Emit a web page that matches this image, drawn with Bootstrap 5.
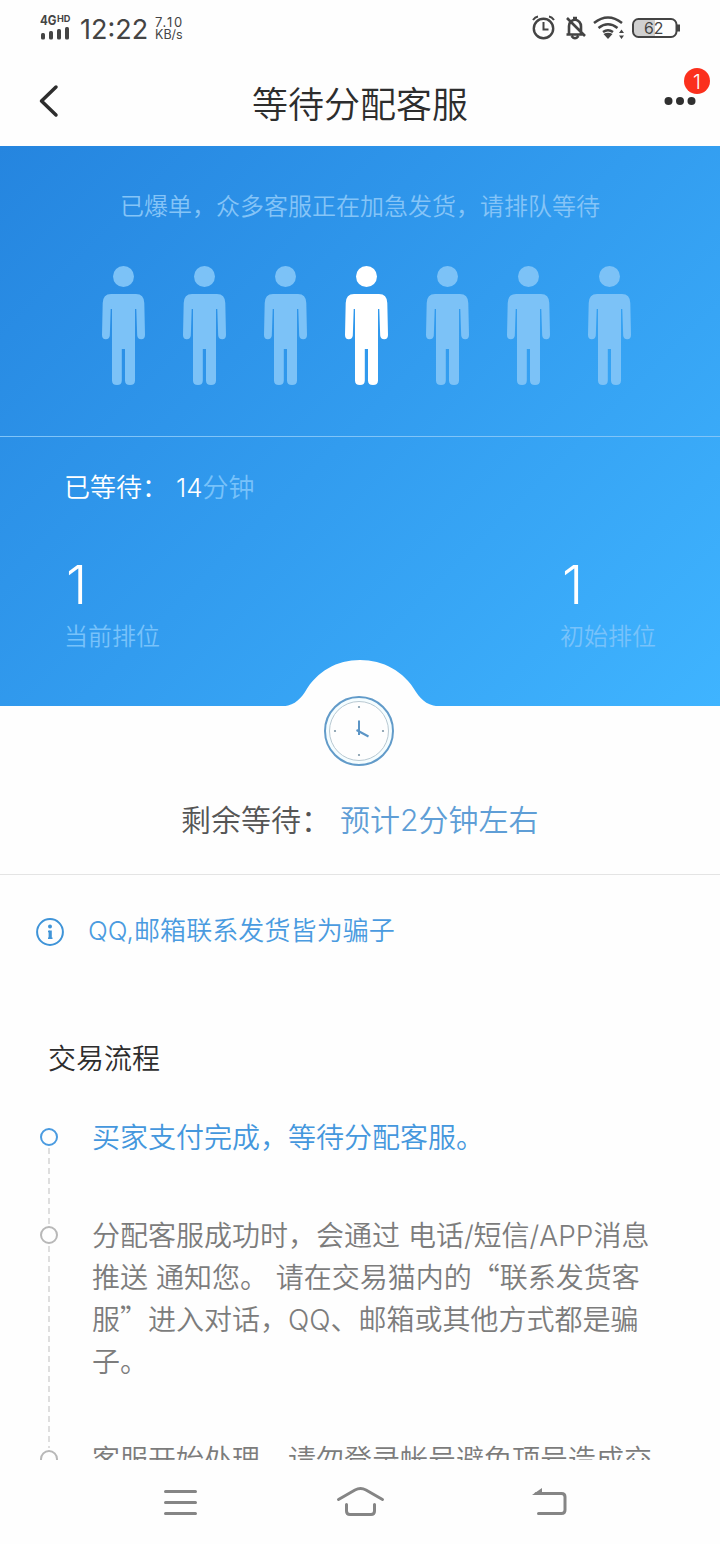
<!DOCTYPE html>
<html lang="zh-CN">
<head>
<meta charset="utf-8">
<meta name="viewport" content="width=device-width, initial-scale=1">
<title>等待分配客服</title>
<link href="https://cdn.jsdelivr.net/npm/bootstrap@5.3.0/dist/css/bootstrap.min.css" rel="stylesheet">
<style>
  body { font-family: Inter, "Noto Sans CJK SC", sans-serif; font-weight: 350; color: #2d2d2d; background: #fefefe; }
  .phone { width: 720px; height: 1544px; }
  .statusbar { height: 56px; padding: 0 40px; color: #444; }
  .clock-text { font-size: 27px; line-height: 56px; font-weight: 400; width: 75px; padding-top: 3px; }
  .rate { font-size: 12.5px; line-height: 12px; font-weight: 400; padding-top: 1px; }
  .rate .num { font-size: 13px; letter-spacing: 1.8px; }
  .titlebar { height: 90px; }
  .titlebar h1 { font-size: 36px; line-height: 90px; font-weight: 350; padding-top: 4px; }
  .titlebar .back { left: 38px; top: 28px; }
  .titlebar .more { right: 10px; top: 10px; }
  .hero { height: 560px; background: linear-gradient(135deg, #2585df 0%, #329cef 50%, #3fb4ff 100%); color: #fff; }
  .hero-top { height: 291px; border-bottom: 1px solid #80c4f8; padding-top: 43px; }
  .pale { color: #85c4f7; }
  .notice { font-size: 24px; line-height: 36px; }
  .queue { gap: 38px; padding-left: 102px; margin-top: 40px; color: #7cc2f7; }
  .waited { font-size: 26px; line-height: 36px; padding: 33px 0 0 64px; }
  .waited .pale, .rank .pale { color: #78c2fa; }
  .ranks { padding: 44px 64px 0; }
  .rank-no { font-size: 54px; line-height: 70px; padding-left: 2px; }
  .rank .pale { font-size: 24px; line-height: 32px; padding-top: 1px; }
  .dial { left: 280px; bottom: -61px; }
  .remain { height: 169px; border-bottom: 1px solid #e4e4e4; padding: 92px 0 0 181px; font-size: 30px; line-height: 44px; color: #555; }
  .remain .value { color: #5f9ed6; margin-left: 9px; }
  .warn { height: 113px; padding-left: 36px; gap: 24px; color: #4a9be0; font-size: 26px; }
  .warn span { letter-spacing: .1px; padding-bottom: 3px; }
  .section-title { font-size: 28px; line-height: 40px; padding-left: 48px; margin: 51px 0 0; font-weight: 350; }
  .flow { margin-top: 38px; padding-left: 40px; height: 343px; }
  .flow li { display: grid; grid-template-columns: 18px 1fr; column-gap: 34px; font-size: 28px; line-height: 42px; color: #7c7c7c; }
  .rail { display: flex; flex-direction: column; align-items: center; padding-top: 11px; margin-bottom: -11px; }
  .ring { width: 18px; height: 18px; border: 2px solid #b8b8b8; border-radius: 50%; flex: none; }
  .dash { width: 2px; flex: 1; margin: 2px 0; background: repeating-linear-gradient(#dedede 0 6px, transparent 6px 10px); }
  .flow .current { color: #4497dd; }
  .current .ring { border-color: #4a9be0; }
  .step-a { height: 98px; } .step-b { height: 224px; }
  .han { font-family: "Noto Sans CJK SC", sans-serif; line-height: 1; }
  .navkeys { height: 84px; }
  svg { display: block; flex: none; }
</style>
</head>
<body>
<div class="phone mx-auto overflow-hidden d-flex flex-column">
  <div class="statusbar d-flex align-items-center">
    <svg width="32" height="30" viewBox="0 -2 32 30" fill="#444"><text x="0" y="9.500" font-family="Inter" font-weight="700" font-size="12.500" textLength="16.500" lengthAdjust="spacingAndGlyphs">4G</text><text x="17" y="6.500" font-family="Inter" font-weight="700" font-size="9" textLength="13.500" lengthAdjust="spacingAndGlyphs">HD</text><rect x="1" y="18" width="4" height="6.500" rx="1.500"/><rect x="9" y="16" width="4" height="8.500" rx="1.500"/><rect x="17" y="14" width="4" height="10.500" rx="1.500"/><rect x="25" y="12" width="4" height="12.500" rx="1.500"/></svg>
    <span class="clock-text ms-2">12:22</span>
    <div class="rate"><span class="num">7.10</span><br>KB/s</div>
    <svg class="ms-auto" width="150" height="28" viewBox="530 14 150 28" fill="none" stroke="#444" stroke-width="2">
      <circle cx="543.500" cy="28.500" r="9.700" stroke-width="2.400"/><path d="M543.500 22v7.500h5M533 20q2-3 5-3.500M554 20q-2-3-5-3.500"/>
      <path d="M569 34V26q0-5 6-6.500 6 1.500 6 7v7.500M566.500 34.500h17M571.500 36q3.500 4.500 7 0M573 18h4M567 18l18 18" stroke-width="2.600"/>
      <path d="M594 23q14-11 28 0M598.500 28q9.500-7.500 19 0M603 32q5-3.500 10 0" stroke-width="2.500"/><path d="M603.500 34q4.500-2.500 9 0l-4.500 5z" fill="#444" stroke="none"/><path d="M619 33l2.500-3.500 2.500 3.500zm0 2.500 2.500 3.500 2.500-3.500z" fill="#444" stroke="none"/>
      <path d="M639 20h16v17h-16q-5 0-5-5v-7q0-5 5-5z" fill="#d0d0d0" stroke="none"/><rect x="633" y="19" width="43.500" height="18" rx="5.500"/><path d="M678.500 24.500v7" stroke-width="3"/>
      <text x="644" y="34" font-family="Inter" font-weight="400" font-size="16.500" fill="#444" stroke="none" textLength="19.500" lengthAdjust="spacingAndGlyphs">62</text>
    </svg>
  </div>

  <header class="titlebar position-relative text-center">
    <svg class="back position-absolute" width="24" height="36" fill="none" stroke="#2d2d2d" stroke-width="3.500" stroke-linecap="round" stroke-linejoin="round"><path d="M18 3 3.500 17 18 31"/></svg>
    <h1 class="m-0">等待分配客服</h1>
    <svg class="more position-absolute" width="48" height="42" fill="#303030"><circle cx="6.500" cy="35" r="4"/><circle cx="18" cy="35" r="4"/><circle cx="29.500" cy="35" r="4"/><circle cx="35" cy="15" r="13" fill="#fb301d"/><text x="35" y="22.500" font-family="Inter" font-size="20" text-anchor="middle" fill="#fff">1</text></svg>
  </header>

  <section class="hero position-relative">
    <div class="hero-top">
      <div class="notice pale text-center">已爆单，众多客服正在加急发货，请排队等待</div>
      <svg width="0" height="0" class="position-absolute"><symbol id="person" viewBox="0 0 43 120"><circle cx="21.500" cy="11.500" r="10.500"/><path d="M9 29H34Q42 29 42.300 38L43 70Q43 74.200 39.200 74.200Q35.500 74.200 35.200 70.500L34.300 44H33V115.500Q33 120 28 120Q23 120 23 115.500V84H19.800V115.500Q19.800 120 15 120Q10 120 10 115.500V44H8.700L7.800 70.500Q7.500 74.200 3.800 74.200Q0 74.200 0 70L.7 38Q1 29 9 29Z"/></symbol></svg>
      <div class="queue d-flex">
        <svg width="43" height="120" fill="currentColor"><use href="#person"/></svg>
        <svg width="43" height="120" fill="currentColor"><use href="#person"/></svg>
        <svg width="43" height="120" fill="currentColor"><use href="#person"/></svg>
        <svg width="43" height="120" fill="#fff"><use href="#person"/></svg>
        <svg width="43" height="120" fill="currentColor"><use href="#person"/></svg>
        <svg width="43" height="120" fill="currentColor"><use href="#person"/></svg>
        <svg width="43" height="120" fill="currentColor"><use href="#person"/></svg>
      </div>
    </div>
    <div class="waited d-flex"><span>已等待：</span><span class="ms-2">14</span><span class="pale">分钟</span></div>
    <div class="ranks d-flex justify-content-between">
      <div class="rank"><div class="rank-no">1</div><div class="pale">当前排位</div></div>
      <div class="rank"><div class="rank-no">1</div><div class="pale">初始排位</div></div>
    </div>
    <svg class="dial position-absolute" width="164" height="108" fill="none">
      <path d="M0 47.500C12 47.500 19 42 25 33C37 12 57 1 80 1S124 12 136 33C142 42 149 47.500 162 47.500Z" fill="#fefefe"/>
      <circle cx="79" cy="72" r="34" stroke="#629bc9" stroke-width="2" fill="#f5fdff"/>
      <circle cx="79" cy="72" r="29.500" stroke="#b9c9d2" fill="#fefefe"/>
      <path d="M79 61.500V76M76.500 71 88.500 77.500" stroke="#5b95c6" stroke-width="2"/>
      <g fill="#7d97a8"><circle cx="79" cy="48" r="1.100"/><circle cx="79" cy="96" r="1.100"/><circle cx="55" cy="72" r="1.100"/><circle cx="103" cy="72" r="1.100"/></g>
    </svg>
  </section>

  <section class="remain">剩余等待：<span class="value">预计2分钟左右</span></section>

  <div class="warn d-flex align-items-center">
    <svg width="28" height="28" fill="none" stroke="#3f94d8" stroke-width="2"><circle cx="14" cy="14" r="12.900"/><circle cx="14" cy="8.500" r="2" fill="#3f94d8" stroke="none"/><path d="M14.200 12.500V21" stroke-width="3.200"/><path d="M12 13.500h2M12 20.200h4.500" stroke-width="1.600"/></svg>
    <span>QQ,邮箱联系发货皆为骗子</span>
  </div>

  <h2 class="section-title">交易流程</h2>
  <ul class="flow list-unstyled mb-0 overflow-hidden text-nowrap">
    <li class="step-a current"><div class="rail"><i class="ring"></i><i class="dash"></i></div><div>买家支付完成，等待分配客服。</div></li>
    <li class="step-b"><div class="rail"><i class="ring"></i><i class="dash"></i></div><div>分配客服成功时，会通过 电话/短信/APP消息<br>推送 通知您。 请在交易猫内的<span class="han">“</span>联系发货客<br>服<span class="han">”</span>进入对话，QQ、邮箱或其他方式都是骗<br>子。</div></li>
    <li><div class="rail"><i class="ring"></i></div><div>客服开始处理，请勿登录帐号避免顶号造成交</div></li>
  </ul>

  <nav class="navkeys">
    <svg width="720" height="84" fill="none" stroke="#858585" stroke-width="3" stroke-linecap="round" stroke-linejoin="round"><path d="M165.500 31.500H195.500M165.500 42.500H195.500M165.500 53.500H195.500"/><path d="M338.500 39.500 355 30Q360.500 27 366 30L382.500 39.500M346.500 44.500V51Q346.500 54.500 350 54.500H371Q374.500 54.500 374.500 51V44.500"/><path d="M536 33.500H561.500Q565 33.500 565 37V50Q565 53.500 561.500 53.500H538.500"/><path d="M532 35 542 28V35Z" fill="#858585" stroke="none"/></svg>
  </nav>
</div>
<script src="https://cdn.jsdelivr.net/npm/bootstrap@5.3.0/dist/js/bootstrap.bundle.min.js"></script>
</body>
</html>
